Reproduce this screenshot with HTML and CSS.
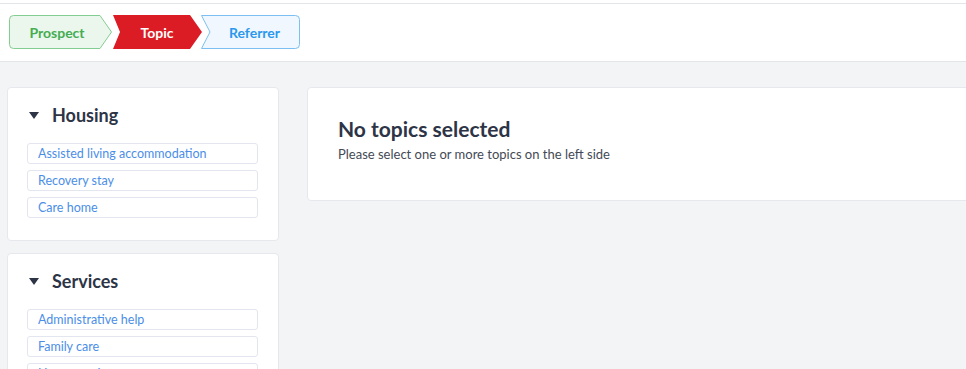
FILE: index.html
```html
<!DOCTYPE html>
<html>

<head>
    <meta charset="utf-8" />
    <title>Topic</title>
    <link rel="stylesheet" href="styles.css">
</head>

<body>
    <div class="header">
        <div class="steps">
            <div class="step step-done">
                <svg class="step-bg" width="104" height="34" viewBox="0 0 104 34">
                    <path d="M4.5 0.5 H91 L102.5 17 L91 33.5 H4.5 Q0.5 33.5 0.5 29.5 V4.5 Q0.5 0.5 4.5 0.5 Z"
                        fill="#ebf6ed" stroke="#84cd92" />
                </svg>
                <span>Prospect</span>
            </div>
            <div class="step step-active">
                <svg class="step-bg" width="90" height="34" viewBox="0 0 90 34">
                    <path d="M1 0 H78 L90 17 L78 34 H1 L8 17 Z" fill="#dc1c24" />
                </svg>
                <span>Topic</span>
            </div>
            <div class="step step-next">
                <svg class="step-bg" width="99" height="34" viewBox="0 0 99 34">
                    <path d="M0.5 0.5 H94.5 Q98.5 0.5 98.5 4.5 V29.5 Q98.5 33.5 94.5 33.5 H0.5 L9 17 Z"
                        fill="#f1f7fe" stroke="#7cc0f1" />
                </svg>
                <span>Referrer</span>
            </div>
        </div>
    </div>

    <div class="main">
        <div class="topics">
            <div class="card">
                <div class="group-title"><span class="caret"></span>Housing</div>
                <div class="option">Assisted living accommodation</div>
                <div class="option">Recovery stay</div>
                <div class="option">Care home</div>
            </div>
            <div class="card">
                <div class="group-title"><span class="caret"></span>Services</div>
                <div class="option">Administrative help</div>
                <div class="option">Family care</div>
                <div class="option">Home services</div>
                <div class="option">Meal delivery</div>
            </div>
        </div>

        <div class="card empty">
            <h2>No topics selected</h2>
            <p>Please select one or more topics on the left side</p>
        </div>
    </div>
</body>

</html>
```

FILE: styles.css
```css
html,
body {
    margin: 0;
    height: 100%;
    overflow: hidden;
}

body {
    background-color: #f3f4f6;
    font-family: 'Lato', 'Open Sans', sans-serif;
    color: #2d3446;
    border-top: 3px solid white;
}

.header {
    background-color: white;
    border-top: 1px solid #e3e5e8;
    border-bottom: 1px solid #e3e5e8;
    padding: 11px 9px 12px;
}

.steps {
    display: flex;
}

.step {
    position: relative;
    height: 34px;
    display: flex;
    align-items: center;
    justify-content: center;
    font-size: 14px;
    font-weight: 700;
}

.step span {
    position: relative;
}

.step-bg {
    position: absolute;
    top: 0;
    left: 0;
}

.step-done {
    width: 104px;
    padding-right: 8px;
    box-sizing: border-box;
    color: #45ad52;
}

.step-active {
    width: 90px;
    margin-left: -1px;
    color: white;
}

.step-next {
    width: 99px;
    margin-left: -1px;
    padding-left: 8px;
    box-sizing: border-box;
    color: #2b98ee;
}

.main {
    display: grid;
    grid-template-columns: 272px 720px;
    gap: 28px;
    padding: 25px 7px;
    align-items: start;
}

.topics {
    display: flex;
    flex-direction: column;
    gap: 12px;
}

.card {
    background-color: white;
    border: 1px solid #e6e8ed;
    border-radius: 4px;
}

.topics .card {
    padding: 15px 20px 22px 19px;
}

.group-title {
    display: flex;
    align-items: center;
    font-size: 18px;
    font-weight: 700;
    line-height: 24px;
    margin-bottom: 16px;
}

.caret {
    width: 0;
    height: 0;
    border-left: 5px solid transparent;
    border-right: 5px solid transparent;
    border-top: 7px solid #2d3446;
    margin: 0 13px 0 2px;
}

.option {
    border: 1px solid #e3e6ee;
    border-radius: 3px;
    height: 19px;
    line-height: 19px;
    padding-left: 10px;
    font-size: 12.5px;
    color: #4b8ee8;
    margin-bottom: 6px;
}

.option:last-child {
    margin-bottom: 0;
}

.empty {
    padding: 27px 30px 38px;
}

.empty h2 {
    margin: 0;
    font-size: 21px;
    font-weight: 700;
    line-height: 27px;
}

.empty p {
    margin: 4px 0 0;
    font-size: 13px;
    color: #444a55;
}
```
